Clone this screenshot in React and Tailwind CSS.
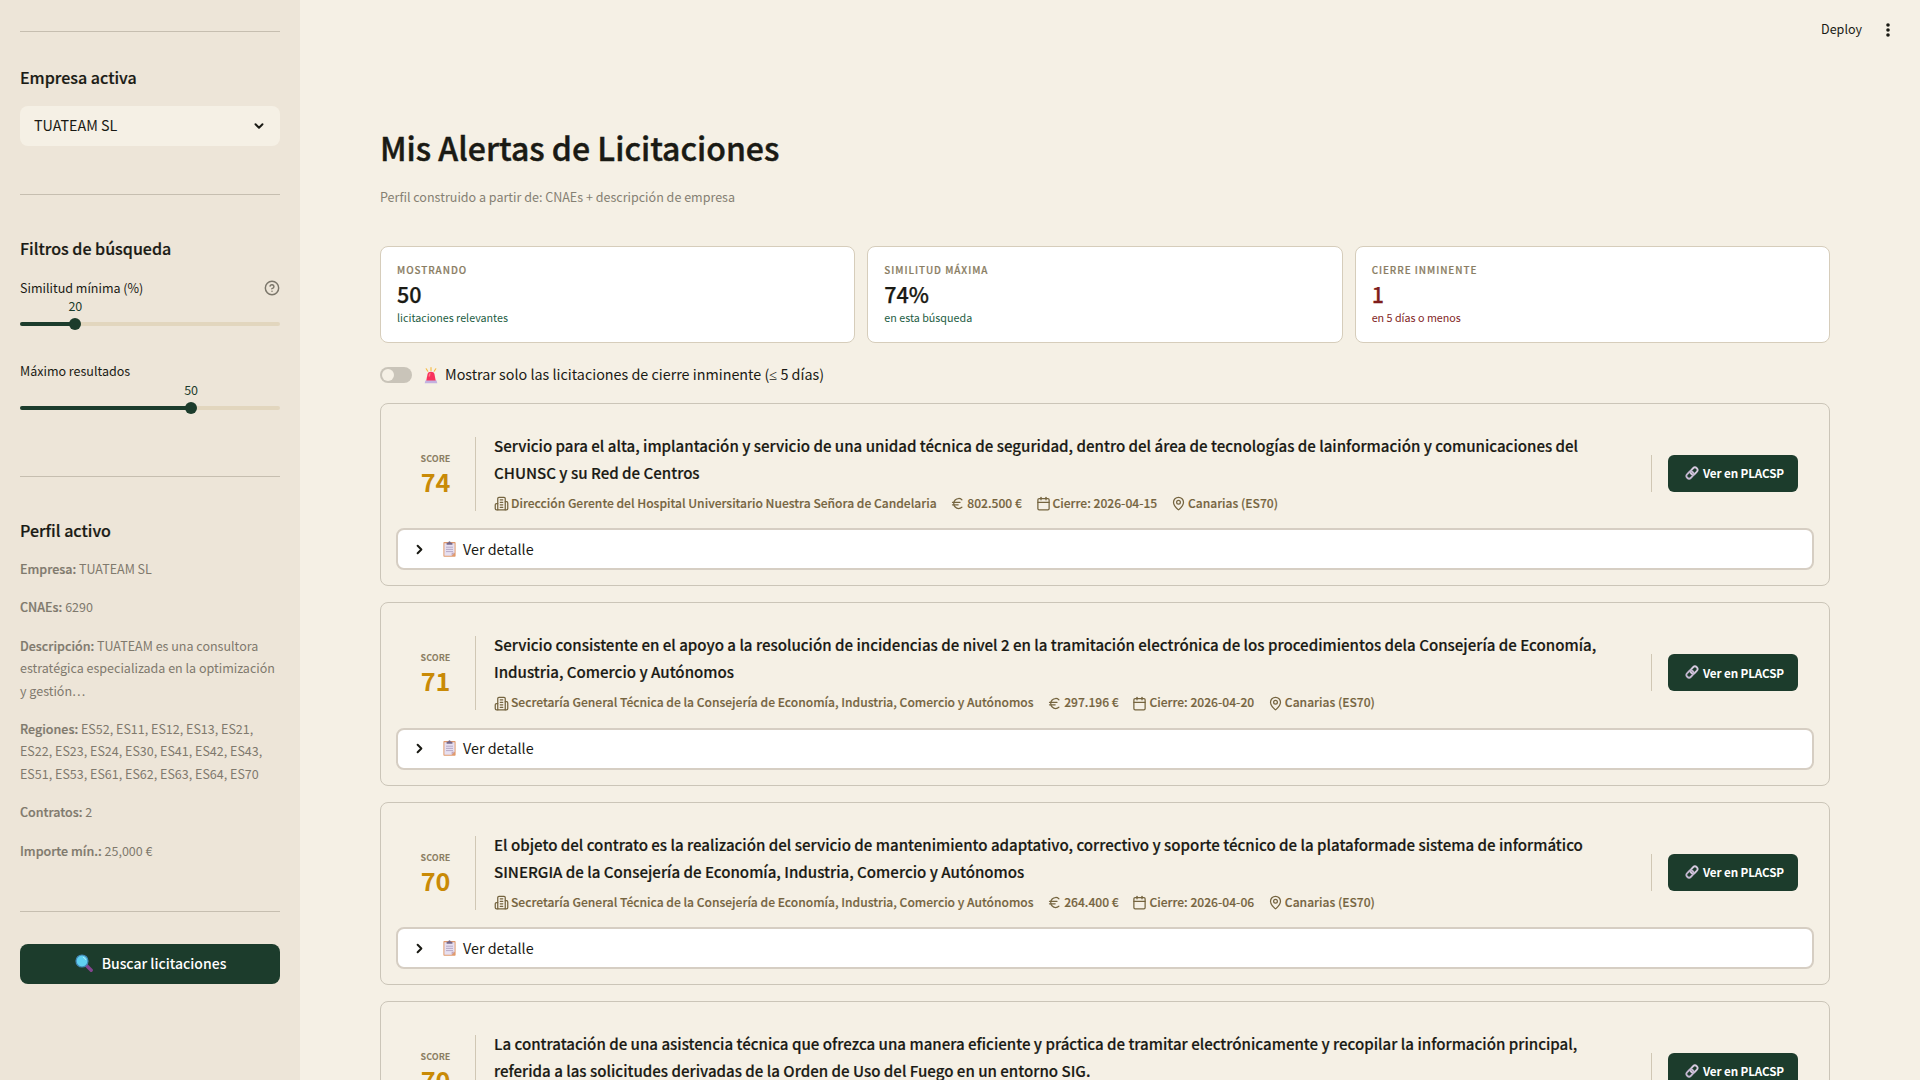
import { ChevronDown, ChevronRight, Euro, Calendar, MapPin, CircleHelp } from "lucide-react";

const tenders = [
  {
    score: 74,
    lines: [
      "Servicio para el alta, implantación y servicio de una unidad técnica de seguridad, dentro del área de tecnologías de lainformación y comunicaciones del",
      "CHUNSC y su Red de Centros",
    ],
    body: "Dirección Gerente del Hospital Universitario Nuestra Señora de Candelaria",
    amount: "802.500 €",
    closing: "2026-04-15",
  },
  {
    score: 71,
    lines: [
      "Servicio consistente en el apoyo a la resolución de incidencias de nivel 2 en la tramitación electrónica de los procedimientos dela Consejería de Economía,",
      "Industria, Comercio y Autónomos",
    ],
    body: "Secretaría General Técnica de la Consejería de Economía, Industria, Comercio y Autónomos",
    amount: "297.196 €",
    closing: "2026-04-20",
  },
  {
    score: 70,
    lines: [
      "El objeto del contrato es la realización del servicio de mantenimiento adaptativo, correctivo y soporte técnico de la plataformade sistema de informático",
      "SINERGIA de la Consejería de Economía, Industria, Comercio y Autónomos",
    ],
    body: "Secretaría General Técnica de la Consejería de Economía, Industria, Comercio y Autónomos",
    amount: "264.400 €",
    closing: "2026-04-06",
  },
  {
    score: 70,
    lines: [
      "La contratación de una asistencia técnica que ofrezca una manera eficiente y práctica de tramitar electrónicamente y recopilar la información principal,",
      "referida a las solicitudes derivadas de la Orden de Uso del Fuego en un entorno SIG.",
    ],
  },
];

const profile = [
  ["Empresa:", ["TUATEAM SL"]],
  ["CNAEs:", ["6290"]],
  ["Descripción:", ["TUATEAM es una consultora", "estratégica especializada en la optimización", "y gestión…"]],
  ["Regiones:", ["ES52, ES11, ES12, ES13, ES21,", "ES22, ES23, ES24, ES30, ES41, ES42, ES43,", "ES51, ES53, ES61, ES62, ES63, ES64, ES70"]],
  ["Contratos:", ["2"]],
  ["Importe mín.:", ["25,000 €"]],
];

const stats = [
  { label: "MOSTRANDO", value: "50", note: "licitaciones relevantes", valueClass: "text-[#1a1a14]", noteClass: "text-[#1c5c3f]" },
  { label: "SIMILITUD MÁXIMA", value: "74%", note: "en esta búsqueda", valueClass: "text-[#1a1a14]", noteClass: "text-[#1c5c3f]" },
  { label: "CIERRE INMINENTE", value: "1", note: "en 5 días o menos", valueClass: "text-[#7f1d1d]", noteClass: "text-[#7f1d1d]" },
];

const BuildingIcon = () => (
  <svg className="mt-[2px] size-[15px] shrink-0" viewBox="0 0 24 24" fill="none" stroke="currentColor" strokeWidth="2" strokeLinecap="round" strokeLinejoin="round">
    <path d="M6 22V4a2 2 0 0 1 2-2h8a2 2 0 0 1 2 2v18Z" />
    <path d="M6 12H4a2 2 0 0 0-2 2v6a2 2 0 0 0 2 2h2" />
    <path d="M18 9h2a2 2 0 0 1 2 2v9a2 2 0 0 1-2 2h-2" />
    <path d="M10 6h4M10 10h4M10 14h4M10 18h4" />
  </svg>
);

const SirenIcon = () => (
  <svg className="h-[17px] w-[14px]" viewBox="0 0 14 17">
    <path d="M7 0.6v3M2.2 1.8l1.6 2.4M11.8 1.8l-1.6 2.4" stroke="#f5b83d" strokeWidth="1.1" strokeLinecap="round" />
    <path d="M3.6 6.8Q4 4.8 7 4.8T10.4 6.8L11.8 14H2.2z" fill="#f8315c" />
    <path d="M5 7.2Q5.2 6 6.6 6L6 9.6H4.5z" fill="#ff7a86" />
    <path d="M1.4 13.6h11.2l.7 2.6H.7z" fill="#c3b2e0" />
  </svg>
);

const ClipboardIcon = () => (
  <svg className="h-[16px] w-[13px]" viewBox="0 0 13 16">
    <rect x="0.4" y="0.9" width="12.2" height="14.8" rx="0.8" fill="#e19a6c" />
    <path d="M1.4 2.2h10.2v9.6l-3 3H1.4z" fill="#e6dff0" />
    <path d="M11.6 11.8l-3 3v-3z" fill="#c4a5b8" />
    <path d="M3.6 3.7V1.8h1.6Q5.4.2 6.5.2t1.3 1.6h1.6v1.9z" fill="#75688a" />
    <path d="M3 6.2h7M3 8.4h7M3 10.6h7" stroke="#a99bbd" strokeWidth="0.8" />
  </svg>
);

const MagnifierIcon = () => (
  <svg className="size-[18px]" viewBox="0 0 18 18">
    <path d="M11.2 11.2l5 5" stroke="#83458f" strokeWidth="3.4" strokeLinecap="round" />
    <circle cx="7" cy="7" r="6" fill="#5fd0f0" stroke="#4387b5" strokeWidth="1.2" />
    <path d="M8.5 3.4q1.6.6 2 2" stroke="#b9f0ff" strokeWidth="1" fill="none" strokeLinecap="round" />
  </svg>
);

const LinkIcon = () => (
  <svg className="size-[14px]" viewBox="0 0 14 14" fill="none" strokeWidth="1.8">
    <rect x="-3.9" y="-2.6" width="7.8" height="5.2" rx="2.6" transform="translate(9 5) rotate(-45)" stroke="#d5c9de" />
    <rect x="-3.9" y="-2.6" width="7.8" height="5.2" rx="2.6" transform="translate(5 9) rotate(-45)" stroke="#c4b7d1" />
  </svg>
);

const Slider = ({ value, percent }) => (
  <div className="h-[28px]">
    <div className="relative h-[18px]">
      <span
        className="absolute -top-px -translate-x-1/2 text-[12.53px] leading-[18px] text-[#1c3c2c]"
        style={{ left: `${percent}%` }}
      >
        {value}
      </span>
    </div>
    <div className="relative mt-[6px] h-1 rounded-full bg-[#e2d6be]">
      <div className="h-1 rounded-full bg-[#1c3c2c]" style={{ width: `${percent}%` }} />
      <div
        className="absolute -top-1 size-3 -translate-x-1/2 rounded-full bg-[#1c3c2c]"
        style={{ left: `${percent}%` }}
      />
    </div>
  </div>
);

const SidebarTitle = ({ children }) => (
  <h2 className="text-[16.05px] font-medium leading-[28px] [-webkit-text-stroke:0.2px]">{children}</h2>
);

const Sidebar = () => (
  <aside className="h-full w-[300px] shrink-0 bg-[#ede5d8] px-5 pt-[31px]">
    <hr className="mb-[31px] border-[#c6beb0]" />
    <SidebarTitle>Empresa activa</SidebarTitle>
    <div className="mt-[15px] flex h-10 items-center justify-between rounded-lg bg-[#f5f0e5] pl-[14px] pr-[14px]">
      <span className="pb-[2px] text-[14.33px] leading-[24px]">TUATEAM SL</span>
      <ChevronDown className="size-[14px]" strokeWidth={3.4} />
    </div>
    <hr className="mb-[39px] mt-[48px] border-[#c6beb0]" />
    <SidebarTitle>Filtros de búsqueda</SidebarTitle>
    <div className="mt-[15px] flex h-[22px] items-center justify-between">
      <span className="text-[12.53px]">Similitud mínima (%)</span>
      <CircleHelp className="size-4 text-[#7b766a]" strokeWidth={2.2} />
    </div>
    <div className="-mt-px">
      <Slider value="20" percent={21.3} />
    </div>
    <div className="mt-[34px] flex h-[22px] items-center text-[12.53px]">Máximo resultados</div>
    <Slider value="50" percent={65.8} />
    <hr className="mb-[39px] mt-[66px] border-[#c6beb0]" />
    <SidebarTitle>Perfil activo</SidebarTitle>
    <div className="mt-[14px] flex flex-col gap-4 whitespace-nowrap text-[12.53px] leading-[22.4px] text-[#7f796d]">
      {profile.map(([label, lines]) => (
        <p key={label}>
          <b className="font-medium [-webkit-text-stroke:0.2px]">{label}</b>{" "}
          {lines.map((line) => (
            <span key={line}>
              {line}
              <br />
            </span>
          ))}
        </p>
      ))}
    </div>
    <hr className="mt-[49px] border-[#c6beb0]" />
    <button className="mt-8 flex h-10 w-full items-center justify-center gap-[9px] rounded-lg bg-[#1c3c2c] pb-[2px] pl-px text-[14px] font-medium text-white">
      <MagnifierIcon />
      Buscar licitaciones
    </button>
  </aside>
);

const StatCard = ({ stat }) => (
  <div className="h-[97px] rounded-lg border border-[#d6cdbb] bg-white px-4 pt-[14px]">
    <div className="text-[9.85px] font-medium leading-[18px] tracking-[0.97px] text-[#8a7d63] [-webkit-text-stroke:0.2px]">{stat.label}</div>
    <div className={`mt-px text-[21.5px] font-medium leading-[28px] [-webkit-text-stroke:0.25px] ${stat.valueClass}`}>{stat.value}</div>
    <div className={`mt-px text-[10.74px] leading-[18px] ${stat.noteClass}`}>{stat.note}</div>
  </div>
);

const TenderCard = ({ tender }) => (
  <article className="mb-4 h-[183.4px] shrink-0 rounded-lg border border-[#cbc5b8] px-[15px] pt-[33px]">
    <div className="flex h-[74px] items-center">
      <div className="flex h-full w-[80px] flex-col items-center justify-center border-r border-[#d0c7b4] pb-[2px]">
        <div className="text-[9px] font-bold leading-[16px] text-[#8a7d63]">SCORE</div>
        <div className="text-[25.2px] font-bold leading-[28px] text-[#c98a06]">{tender.score}</div>
      </div>
      <div className="-mt-[10px] h-full flex-1 whitespace-nowrap pl-[18px]">
        {tender.lines.map((line) => (
          <h3 key={line} className="text-[15.08px] font-medium leading-[27px] [-webkit-text-stroke:0.18px]">{line}</h3>
        ))}
        {tender.body && (
          <div className="mt-[7px] flex h-[20px] items-center gap-[13.7px] text-[12.08px] font-medium text-[#75643f]">
            <span className="flex items-center gap-[2px]"><BuildingIcon /><span className="[-webkit-text-stroke:0.15px]">{tender.body}</span></span>
            <span className="flex items-center gap-[2px]"><Euro className="mt-[2px] size-[15px]" /><span className="[-webkit-text-stroke:0.15px]">{tender.amount}</span></span>
            <span className="flex items-center gap-[2px]"><Calendar className="mt-[2px] size-[15px]" /><span className="[-webkit-text-stroke:0.15px]">Cierre: {tender.closing}</span></span>
            <span className="flex items-center gap-[2px]"><MapPin className="mt-[2px] size-[15px]" /><span className="[-webkit-text-stroke:0.15px]">Canarias (ES70)</span></span>
          </div>
        )}
      </div>
      <div className="-mt-px mr-4 border-l border-[#d0c7b4] pl-4">
        <button className="flex h-[37px] w-[130px] items-center justify-center gap-[4px] rounded-md bg-[#1c3c2c] pb-px pl-[3px] text-[11.64px] font-bold tracking-[-0.1px] text-white">
          <LinkIcon />
          Ver en PLACSP
        </button>
      </div>
    </div>
    <div className="mt-[17.3px] flex h-[42px] items-center rounded-lg border-2 border-[#d6cec3] bg-white pl-[14px] text-[14.33px]">
      <ChevronRight className="size-[15px]" strokeWidth={3.2} />
      <span className="ml-[16px] flex items-center gap-[7px] pb-px"><ClipboardIcon />Ver detalle</span>
    </div>
  </article>
);

const App = () => {
  return (
    <div className="flex h-[1080px] w-[1920px] overflow-hidden bg-[#f5f0e5] font-['Noto_Sans_CJK_SC','Noto_Sans',sans-serif] text-[#1a1a14]">
      <Sidebar />
      <main className="flex min-w-0 flex-1 flex-col overflow-hidden">
        <header className="flex h-[60px] shrink-0 items-center justify-end pr-[30px] text-[12.53px]">
          <span className="pb-px">Deploy</span>
          <svg className="ml-[24px] h-4 w-1" viewBox="0 0 4 16" fill="currentColor">
            <circle cx="2" cy="3" r="1.8" />
            <circle cx="2" cy="8" r="1.8" />
            <circle cx="2" cy="13" r="1.8" />
          </svg>
        </header>
        <div className="flex min-h-0 flex-1 flex-col pl-20 pr-[90px]">
          <h1 className="mt-[63px] h-[48px] shrink-0 text-[32px] font-medium leading-[48px] [-webkit-text-stroke:0.45px]">Mis Alertas de Licitaciones</h1>
          <p className="mt-[15px] h-[22px] shrink-0 text-[12.54px] leading-[22px] text-[#858073]">
            Perfil construido a partir de: CNAEs + descripción de empresa
          </p>
          <section className="mt-[38px] grid shrink-0 grid-cols-3 gap-3">
            {stats.map((stat) => (
              <StatCard key={stat.label} stat={stat} />
            ))}
          </section>
          <label className="mt-[20px] flex h-[24px] shrink-0 items-center text-[14.33px]">
            <span className="flex h-4 w-8 items-center rounded-full bg-[#c9c4b9] pl-0.5">
              <span className="size-3 rounded-full bg-[#f5f0e5]" />
            </span>
            <span className="ml-3 flex items-center gap-[7px]">
              <SirenIcon />
              <span className="pb-[2px] leading-[24px]">
                Mostrar solo las licitaciones de cierre inminente (<span className="font-['Noto_Sans'] text-[14.5px] leading-none">≤</span> 5 días)
              </span>
            </span>
          </label>
          <section className="mt-[16px] flex flex-col">
            {tenders.map((tender) => (
              <TenderCard key={tender.lines[0]} tender={tender} />
            ))}
          </section>
        </div>
      </main>
    </div>
  );
};

export default App;
